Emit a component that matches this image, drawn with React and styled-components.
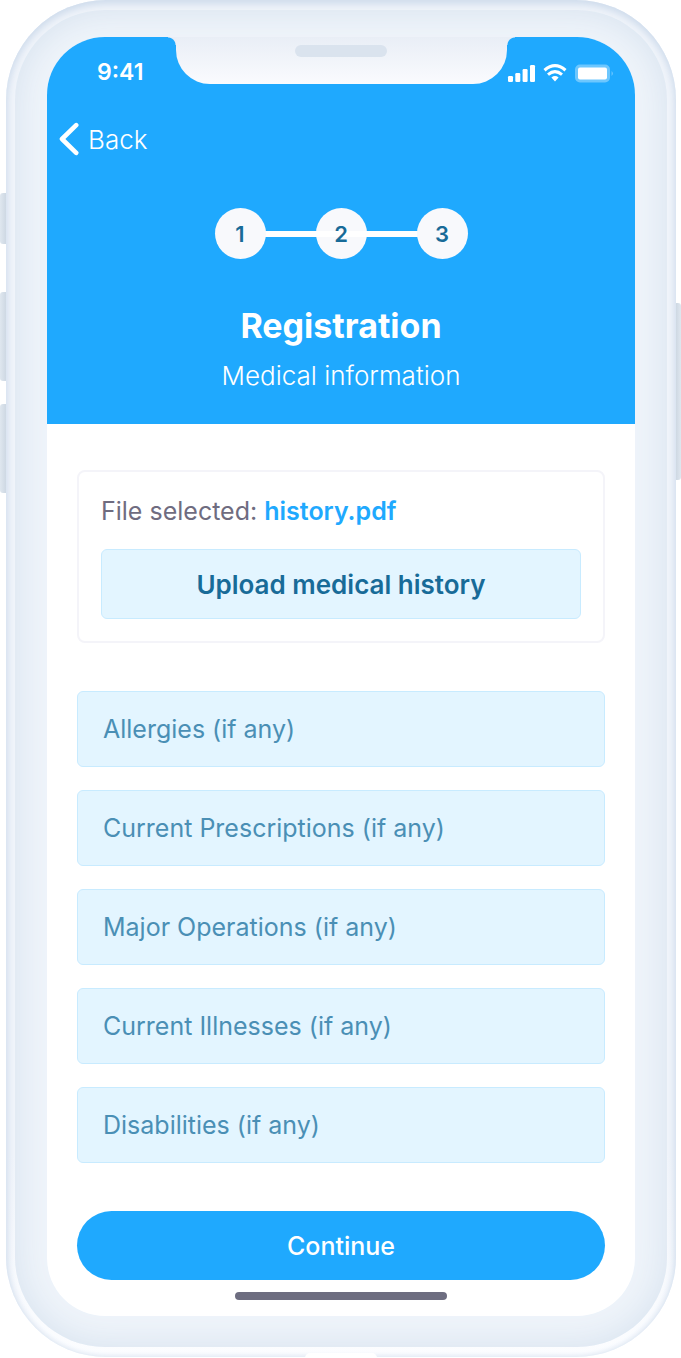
import { useState } from 'react';
import styled, { createGlobalStyle } from 'styled-components'

const campos=[
    {nome:'allergies',titulo:'Allergies (if any)'},
    {nome:'prescriptions',titulo:'Current Prescriptions (if any)'},
    {nome:'operations',titulo:'Major Operations (if any)'},
    {nome:'illnesses',titulo:'Current Illnesses (if any)'},
    {nome:'disabilities',titulo:'Disabilities (if any)'},
]
const etapas=[1,2,3]

export default function App(){
    const [valores,setValores]=useState({})
    function alterar(e){
        setValores({...valores,[e.target.name]:e.target.value})
    }
    return (
        <>
        <Global />
        <Pagina>
            <Aparelho>
                <Botao $topo={193} $altura={51}/>
                <Botao $topo={292} $altura={89}/>
                <Botao $topo={404} $altura={89}/>
                <Botao $direita $topo={303} $altura={177}/>
                <Moldura>
                    <Tela>
                        <Cabecalho>
                            <BarraStatus>
                                <Hora>9:41</Hora>
                                <Entalhe><AltoFalante /></Entalhe>
                                <IconesStatus />
                            </BarraStatus>
                            <Voltar type='button'>
                                <svg width='20' height='34' viewBox='0 0 20 34' fill='none' stroke='white' strokeWidth='4.6' strokeLinecap='round' strokeLinejoin='round' aria-hidden='true'>
                                    <path d='M17.2 3.2 L3 17 L17.2 30.8'/>
                                </svg>
                                Back
                            </Voltar>
                            <Etapas>
                                {etapas.map(n=><Etapa key={n} $meio={n===2}>{n}</Etapa>)}
                            </Etapas>
                            <h1>Registration</h1>
                            <p>Medical information</p>
                        </Cabecalho>
                        <Formulario onSubmit={e=>e.preventDefault()}>
                            <Arquivo>
                                <p>File selected: <a href='#history'>history.pdf</a></p>
                                <Enviar type='button'>Upload medical history</Enviar>
                            </Arquivo>
                            <Campos>
                                {campos.map(({nome,titulo})=>
                                    <Campo 
                                        key={nome}
                                        name={nome}
                                        aria-label={titulo}
                                        placeholder={titulo}
                                        value={valores[nome]||''}
                                        onChange={alterar}
                                    />
                                )}
                            </Campos>
                            <Continuar type='submit'>Continue</Continuar>
                        </Formulario>
                        <Indicador />
                    </Tela>
                </Moldura>
            </Aparelho>
        </Pagina>
        </>
    )
}
function IconesStatus(){
    return(
        <Icones>
            <svg width='107' height='20' viewBox='0 0 107 20' fill='white' aria-hidden='true'>
                <rect x='1' y='12' width='5' height='6' rx='1.2'/>
                <rect x='8.3' y='9' width='5' height='9' rx='1.2'/>
                <rect x='15.6' y='5' width='5' height='13' rx='1.2'/>
                <rect x='23' y='1' width='5' height='17' rx='1.2'/>
                <path d='M37.5 6.2 Q48 -2.8 58.5 6.2' fill='none' stroke='white' strokeWidth='3.2'/>
                <path d='M41 10.6 Q48 4.6 55 10.6' fill='none' stroke='white' strokeWidth='3'/>
                <path d='M44.4 13.4 Q48 10.6 51.6 13.4 L48 17.6 Z'/>
                <rect x='68' y='0.5' width='35' height='18' rx='5' opacity='0.35'/>
                <rect x='71' y='3.5' width='29' height='12' rx='2'/>
                <path d='M104.6 7 Q107 9.5 104.6 12 Z' opacity='0.4'/>
            </svg>
        </Icones>
    )
}

const Global=createGlobalStyle`
*{
box-sizing:border-box;
}
body{
margin:0;
background:white;
font-family:Inter,"Liberation Sans",sans-serif;
}
h1,p{
margin:0;
}
button,input{
font-family:inherit;
margin:0;
}
`
const Pagina=styled.div`
padding:0 5px 1px 6px;
`
const Aparelho=styled.div`
position:relative;
padding:10px 9px;
border-radius:100px;
background:linear-gradient(#f0f4fa,#f0f4fa 85%,#fcfdff);
box-shadow:inset 0 4px 8px #cfdcec,inset 0 0 6px #d9e4f1;
&::after{
content:'';
position:absolute;
bottom:-1px;
left:calc(50% - 36px);
width:72px;
height:5px;
border-radius:8px 8px 0 0;
background:white;
}
`
const Botao=styled.span`
position:absolute;
top:${p=>p.$topo}px;
${p=>p.$direita?'right':'left'}:${p=>p.$direita?-5:-6}px;
width:${p=>p.$direita?5:6}px;
height:${p=>p.$altura}px;
border-radius:${p=>p.$direita?'0 3px 3px 0':'3px 0 0 3px'};
background:linear-gradient(${p=>p.$direita?'to left':'to right'},#dfe7ef,#ced8e3);
`
const Moldura=styled.div`
padding:27px 32px 31px;
border-radius:90px;
background:#eff4fa;
box-shadow:inset 0 0 36px #d5e1ee;
`
const Tela=styled.main`
display:flex;
flex-direction:column;
overflow:hidden;
border-radius:58px;
background:white;
padding-bottom:16px;
`
const Cabecalho=styled.header`
display:flex;
flex-direction:column;
align-items:center;
padding-bottom:32px;
background:#1fa9fe;
color:white;
h1{
margin-top:47px;
font-size:34px;
line-height:40px;
font-weight:700;
}
p{
margin-top:14px;
font-size:26px;
line-height:32px;
font-weight:300;
}
`
const BarraStatus=styled.div`
display:grid;
grid-template-columns:1fr 331px 1fr;
width:100%;
height:47px;
`
const Hora=styled.span`
padding:23px 0 0 50px;
font-size:23px;
line-height:24px;
font-weight:600;
`
const Entalhe=styled.div`
position:relative;
display:flex;
justify-content:center;
align-items:flex-start;
padding-top:8px;
border-radius:0 0 34px 34px;
background:linear-gradient(#e9eef6,#fafbfe);
&::before,&::after{
content:'';
position:absolute;
top:0;
width:8px;
height:8px;
}
&::before{
right:100%;
background:radial-gradient(circle at 0 100%,transparent 7px,#e9eef6 8px);
}
&::after{
left:100%;
background:radial-gradient(circle at 100% 100%,transparent 7px,#e9eef6 8px);
}
`
const AltoFalante=styled.span`
width:92px;
height:12px;
border-radius:6px;
background:#dae3ee;
`
const Icones=styled.div`
padding-top:27px;
svg{
display:block;
}
`
const Voltar=styled.button`
display:flex;
align-items:center;
align-self:flex-start;
gap:9px;
height:36px;
margin-top:37px;
padding:0 12px;
border:none;
background:none;
color:white;
font-size:26px;
font-weight:300;
`
const Etapas=styled.div`
display:flex;
align-items:center;
gap:50px;
margin-top:51px;
background:linear-gradient(white,white) center/200px 6px no-repeat;
`
const Etapa=styled.span`
display:flex;
align-items:center;
justify-content:center;
width:51px;
height:51px;
border-radius:50%;
background:${p=>p.$meio?'linear-gradient(white,white) center/100% 6px no-repeat,':''} #f8f9fc;
color:#186b98;
font-size:22px;
font-weight:600;
`
const Formulario=styled.form`
display:flex;
flex-direction:column;
gap:48px;
padding:46px 30px 12px;
`
const Arquivo=styled.section`
padding:22px;
border:2px solid #f4f4f9;
border-radius:8px;
p{
margin-bottom:21px;
color:#6f6c80;
font-size:25px;
line-height:34px;
white-space:nowrap;
}
a{
color:#1fa9fe;
font-weight:600;
text-decoration:none;
}
`
const Enviar=styled.button`
display:block;
width:100%;
height:70px;
border:1px solid #c8ebff;
border-radius:6px;
background:#e3f5ff;
color:#186b98;
font-size:26px;
font-weight:600;
`
const Campos=styled.div`
display:flex;
flex-direction:column;
gap:23px;
`
const Campo=styled.input`
width:100%;
height:76px;
padding:0 25px;
border:1px solid #c8ebff;
border-radius:6px;
background:#e3f5ff;
color:#186b98;
font-size:25px;
&::placeholder{
color:#4a8fb5;
opacity:1;
}
`
const Continuar=styled.button`
height:69px;
border:none;
border-radius:35px;
background:#1fa9fe;
color:white;
font-size:25px;
font-weight:500;
`
const Indicador=styled.div`
align-self:center;
width:36%;
height:8px;
border-radius:4px;
background:#6d6d80;
`
